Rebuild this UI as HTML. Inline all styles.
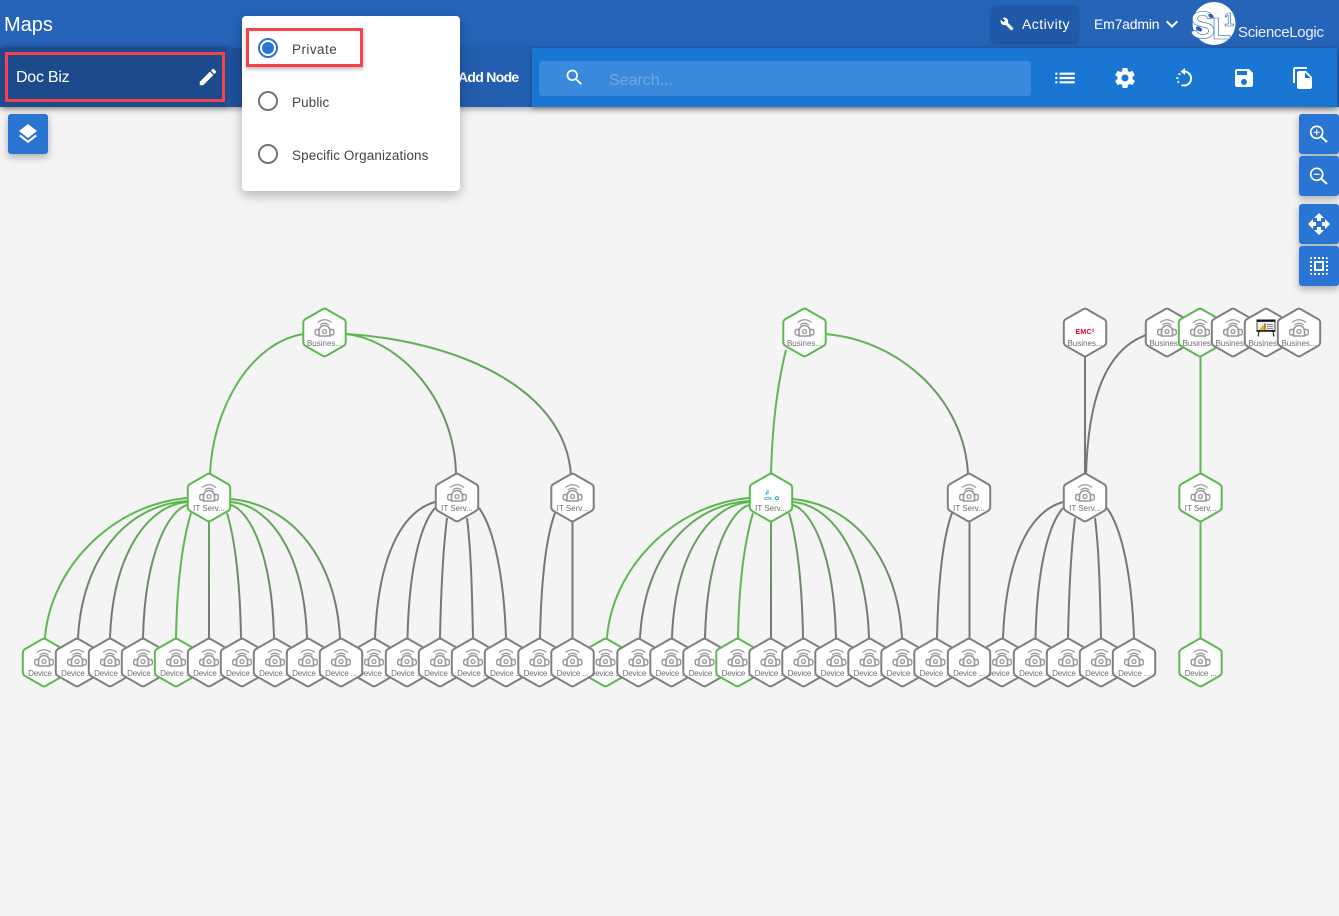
<!DOCTYPE html>
<html lang="en"><head><meta charset="utf-8"><title>Maps</title>
<style>
html,body{margin:0;padding:0;width:1339px;height:916px;overflow:hidden;background:#f4f4f4;font-family:"Liberation Sans",sans-serif}
.a{position:absolute}
svg.i{position:absolute;fill:#fff}
.btn{position:absolute;width:40px;height:40px;background:#2a75d3;border-radius:3px;box-shadow:0 3px 8px rgba(0,0,0,.3)}
.btn svg{position:absolute;left:8px;top:8px;width:24px;height:24px;fill:#fff}
.r{position:absolute;left:258px;width:20px;height:20px;box-sizing:border-box;border:2px solid #757575;border-radius:50%}
.l{position:absolute;left:292px;font-size:13.5px;line-height:18px;color:#444;white-space:nowrap;letter-spacing:.1px}
#g{position:absolute;left:0;top:0}
#g path.e{fill:none;stroke-width:2}
#g text{font-size:8px;fill:#6e6e6e;text-anchor:middle;font-family:"Liberation Sans",sans-serif}
#g text.d{letter-spacing:-.15px}
.k{stroke:#777}.n{stroke:#5cb94f}.t{stroke:url(#gt)}.b{stroke:url(#gb)}
</style></head><body>

<svg id="g" width="1339" height="916" viewBox="0 0 1339 916">
<defs>
<linearGradient id="gt" gradientUnits="userSpaceOnUse" x1="0" y1="333" x2="0" y2="475"><stop offset="0" stop-color="#5cb94f"/><stop offset="1" stop-color="#777"/></linearGradient>
<linearGradient id="gb" gradientUnits="userSpaceOnUse" x1="0" y1="498" x2="0" y2="640"><stop offset="0" stop-color="#5cb94f"/><stop offset=".8" stop-color="#777"/></linearGradient>
<g id="ic" fill="none" stroke="#999">
<path d="M-7,-10Q0,-15.500 7,-10" stroke-width="1.200"/>
<path d="M-4.500,-7.500Q0,-11 4.500,-7.500" stroke-width="1.200"/>
<path d="M-5.500,3.500V-1.500A5.500,5.500 0 0 1 5.500,-1.500V3.500Z" stroke-width="1.600"/>
<circle cx="0" cy="-1" r="2" stroke-width="1.300"/>
<path d="M-5.500,-3H-7.500Q-9.300,-3 -9.300,-1V.5Q-9.300,2.500 -7.500,2.500H-5.500M5.500,-3H7.500Q9.300,-3 9.300,-1V.5Q9.300,2.500 7.500,2.500H5.500" stroke-width="1.400"/>
</g>
<path id="hk" d="M-3,-22.600Q0,-25 3,-22.600L18.900,-13.500Q21.200,-12.200 21.200,-9.500V9.500Q21.200,12.200 18.900,13.500L3,22.600Q0,25 -3,22.600L-18.900,13.500Q-21.200,12.200 -21.200,9.500V-9.500Q-21.200,-12.200 -18.900,-13.500Z" fill="#fff" stroke="#808080" stroke-width="2"/>
<path id="hn" d="M-3,-22.600Q0,-25 3,-22.600L18.900,-13.500Q21.200,-12.200 21.200,-9.500V9.500Q21.200,12.200 18.900,13.500L3,22.600Q0,25 -3,22.600L-18.900,13.500Q-21.200,12.200 -21.200,9.500V-9.500Q-21.200,-12.200 -18.900,-13.500Z" fill="#fff" stroke="#5cb94f" stroke-width="2"/>
<g id="nk"><use href="#hk"/><use href="#ic"/></g>
<g id="nn"><use href="#hn"/><use href="#ic"/></g>
<g id="e10">
<path class="e n" d="M187,498C110,505 50,570 45,638"/>
<path class="e b" d="M187,501C125,505 82,560 78,638"/>
<path class="e b" d="M187,502C150,505 113,550 110,638"/>
<path class="e b" d="M187,505C170,510 145,550 143,638"/>
<path class="e n" d="M191,513C183,540 177,580 176,638"/>
<path class="e b" d="M209,522V640"/>
<path class="e b" d="M227,513C235,540 240,580 241,638"/>
<path class="e b" d="M231,505C248,510 272,550 274,638"/>
<path class="e b" d="M231,502C268,505 304,550 307,638"/>
<path class="e b" d="M231,499C293,505 336,560 340,638"/>
</g>
<g id="e5">
<path class="e k" d="M435,502C400,512 378,560 375,638"/>
<path class="e k" d="M435,508C420,525 409,570 407.500,638"/>
<path class="e k" d="M447,518C443,550 441,590 440,638"/>
<path class="e k" d="M467,518C471,550 472,590 473,638"/>
<path class="e k" d="M479,508C495,530 504,580 506,638"/>
</g>
<g id="e2">
<path class="e k" d="M555,513C545,540 541,590 540,638"/>
<path class="e k" d="M572.500,522V640"/>
</g>
</defs>

<!-- edges -->
<path class="e n" d="M304,334C250,342 212,410 210,475"/>
<path class="e t" d="M346,334C400,340 455,400 456,475"/>
<path class="e t" d="M346,334C450,340 565,385 571,475"/>
<use href="#e10"/>
<use href="#e5"/>
<use href="#e2"/>
<use href="#e10" x="562"/>
<use href="#e2" x="397"/>
<use href="#e5" x="628"/>
<path class="e n" d="M786,350C776,390 772,430 771,475"/>
<path class="e t" d="M825,334C900,340 965,400 968,475"/>
<path class="e k" d="M1085,357V475"/>
<path class="e k" d="M1146,335C1105,350 1088,400 1086,475"/>
<path class="e n" d="M1200.500,357V475M1200.500,522V640"/>

<!-- top row -->
<g transform="translate(324.500,332.500)"><use href="#nn"/><text y="13.500">Busines...</text></g>
<g transform="translate(804.500,332.500)"><use href="#nn"/><text y="13.500">Busines...</text></g>
<g transform="translate(1085,332.500)"><use href="#hk"/><text y="1.500" style="font-size:7px;font-weight:bold;fill:#e4002b;letter-spacing:.3px">EMC²</text><text y="13.500">Busines...</text></g>
<g transform="translate(1167,332.500)"><use href="#nk"/><text y="13.500">Busines...</text></g>
<g transform="translate(1200,332.500)"><use href="#nn"/><text y="13.500">Busines...</text></g>
<g transform="translate(1233,332.500)"><use href="#nk"/><text y="13.500">Busines...</text></g>
<g transform="translate(1266,332.500)"><use href="#hk"/>
<rect x="-9.500" y="-13" width="19" height="2" fill="#111"/><rect x="-9" y="-11" width="18" height="9" fill="#eee" stroke="#222" stroke-width=".8"/>
<rect x="-6" y="-5" width="1.800" height="3" fill="#e9a21b"/><rect x="-4" y="-7" width="1.800" height="5" fill="#e9a21b"/><rect x="-2" y="-9" width="1.800" height="7" fill="#c77a12"/>
<path d="M1,-8H7M1,-6H7M1,-4H7" stroke="#889" stroke-width="1"/>
<path d="M-9.500,-1.500H9.500" stroke="#111" stroke-width="1.500"/><path d="M-7,-1L-8,4M7,-1L8,4" stroke="#111" stroke-width="1"/>
<text y="13.500">Busines...</text></g>
<g transform="translate(1299,332.500)"><use href="#nk"/><text y="13.500">Busines...</text></g>

<!-- middle row -->
<g transform="translate(209,497.500)"><use href="#nn"/><text y="13.500">IT Serv...</text></g>
<g transform="translate(457,497.500)"><use href="#nk"/><text y="13.500">IT Serv...</text></g>
<g transform="translate(572.500,497.500)"><use href="#nk"/><text y="13.500">IT Serv...</text></g>
<g transform="translate(771,497.500)"><use href="#hn"/>
<path d="M-6,-4V-3M-4.500,-6V-3M-3,-7.500V-3" stroke="#1ba0d7" stroke-width=".9"/>
<text x="-3" y="2.500" style="font-size:5.500px;font-weight:bold;fill:#1ba0d7">cis</text><circle cx="6" cy=".8" r="1.500" fill="none" stroke="#1ba0d7"/>
<text y="13.500">IT Serv...</text></g>
<g transform="translate(969,497.500)"><use href="#nk"/><text y="13.500">IT Serv...</text></g>
<g transform="translate(1085,497.500)"><use href="#nk"/><text y="13.500">IT Serv...</text></g>
<g transform="translate(1200.500,497.500)"><use href="#nn"/><text y="13.500">IT Serv...</text></g>

<!-- bottom row: first node of each later group sits beneath its left neighbour -->
<g transform="translate(374,662.500)"><use href="#nk"/><text class="d" y="13.500">Device ...</text></g>
<g transform="translate(605.500,662.500)"><use href="#nn"/><text class="d" y="13.500">Device ...</text></g>
<g transform="translate(1002,662.500)"><use href="#nk"/><text class="d" y="13.500">Device ...</text></g>
<g transform="translate(44,662.500)"><use href="#nn"/><text class="d" y="13.500">Device ...</text></g>
<g transform="translate(77,662.500)"><use href="#nk"/><text class="d" y="13.500">Device ...</text></g>
<g transform="translate(110,662.500)"><use href="#nk"/><text class="d" y="13.500">Device ...</text></g>
<g transform="translate(143,662.500)"><use href="#nk"/><text class="d" y="13.500">Device ...</text></g>
<g transform="translate(176,662.500)"><use href="#nn"/><text class="d" y="13.500">Device ...</text></g>
<g transform="translate(209,662.500)"><use href="#nk"/><text class="d" y="13.500">Device ...</text></g>
<g transform="translate(242,662.500)"><use href="#nk"/><text class="d" y="13.500">Device ...</text></g>
<g transform="translate(275,662.500)"><use href="#nk"/><text class="d" y="13.500">Device ...</text></g>
<g transform="translate(308,662.500)"><use href="#nk"/><text class="d" y="13.500">Device ...</text></g>
<g transform="translate(341,662.500)"><use href="#nk"/><text class="d" y="13.500">Device ...</text></g>
<g transform="translate(407,662.500)"><use href="#nk"/><text class="d" y="13.500">Device ...</text></g>
<g transform="translate(440,662.500)"><use href="#nk"/><text class="d" y="13.500">Device ...</text></g>
<g transform="translate(473,662.500)"><use href="#nk"/><text class="d" y="13.500">Device ...</text></g>
<g transform="translate(506,662.500)"><use href="#nk"/><text class="d" y="13.500">Device ...</text></g>
<g transform="translate(539.500,662.500)"><use href="#nk"/><text class="d" y="13.500">Device ...</text></g>
<g transform="translate(572.500,662.500)"><use href="#nk"/><text class="d" y="13.500">Device ...</text></g>
<g transform="translate(638.500,662.500)"><use href="#nk"/><text class="d" y="13.500">Device ...</text></g>
<g transform="translate(671.500,662.500)"><use href="#nk"/><text class="d" y="13.500">Device ...</text></g>
<g transform="translate(704.500,662.500)"><use href="#nk"/><text class="d" y="13.500">Device ...</text></g>
<g transform="translate(737.500,662.500)"><use href="#nn"/><text class="d" y="13.500">Device ...</text></g>
<g transform="translate(770.500,662.500)"><use href="#nk"/><text class="d" y="13.500">Device ...</text></g>
<g transform="translate(803.500,662.500)"><use href="#nk"/><text class="d" y="13.500">Device ...</text></g>
<g transform="translate(836.500,662.500)"><use href="#nk"/><text class="d" y="13.500">Device ...</text></g>
<g transform="translate(869.500,662.500)"><use href="#nk"/><text class="d" y="13.500">Device ...</text></g>
<g transform="translate(902.500,662.500)"><use href="#nk"/><text class="d" y="13.500">Device ...</text></g>
<g transform="translate(935.500,662.500)"><use href="#nk"/><text class="d" y="13.500">Device ...</text></g>
<g transform="translate(969,662.500)"><use href="#nk"/><text class="d" y="13.500">Device ...</text></g>
<g transform="translate(1035,662.500)"><use href="#nk"/><text class="d" y="13.500">Device ...</text></g>
<g transform="translate(1068,662.500)"><use href="#nk"/><text class="d" y="13.500">Device ...</text></g>
<g transform="translate(1101,662.500)"><use href="#nk"/><text class="d" y="13.500">Device ...</text></g>
<g transform="translate(1134,662.500)"><use href="#nk"/><text class="d" y="13.500">Device ...</text></g>
<g transform="translate(1200.500,662.500)"><use href="#nn"/><text class="d" y="13.500">Device ...</text></g>
</svg>

<!-- header -->
<div class="a" style="left:0;top:0;width:1339px;height:48px;background:#2564b9;box-shadow:0 2px 4px rgba(0,0,0,.3)"></div>
<div class="a" style="left:0;top:48px;width:1339px;height:59px;background:#2461b3;box-shadow:0 2px 6px rgba(0,0,0,.35)"></div>
<div class="a" style="left:0;top:48px;width:226px;height:59px;background:#1c4a8c;box-shadow:2px 0 6px rgba(0,0,0,.3)"></div>
<div class="a" style="left:226px;top:48px;width:306px;height:59px;background:linear-gradient(90deg,#1f509a,#2460b3)"></div>
<div class="a" style="left:532px;top:48px;width:805px;height:59px;background:#1976d2;box-shadow:0 2px 5px rgba(0,0,0,.3)"></div>
<div class="a" style="left:539px;top:61px;width:492px;height:35px;background:#3b89dc;border-radius:3px"></div>

<div class="a" style="left:4px;top:12px;font-size:20px;line-height:26px;color:#fff">Maps</div>
<div class="a" style="left:16px;top:68px;font-size:16px;line-height:20px;color:#fff;letter-spacing:-.25px">Doc Biz</div>
<svg class="i" style="left:197px;top:66px" width="22" height="22" viewBox="0 0 24 24"><path d="M3 17.250V21h3.750L17.810 9.940l-3.750-3.750L3 17.250zM20.710 7.040a1 1 0 0 0 0-1.410l-2.340-2.340a1 1 0 0 0-1.410 0l-1.830 1.830 3.750 3.750 1.830-1.830z"/></svg>
<div class="a" style="left:5px;top:52px;width:220px;height:50px;box-sizing:border-box;border:3px solid #f4434b"></div>
<div class="a" style="left:458px;top:69px;font-size:14px;line-height:16px;color:#fff;font-weight:bold;letter-spacing:-.7px">Add Node</div>
<svg class="i" style="left:564px;top:67px" width="21" height="21" viewBox="0 0 24 24"><path d="M15.500 14h-.790l-.280-.270A6.471 6.471 0 0 0 16 9.500 6.500 6.500 0 1 0 9.500 16c1.610 0 3.090-.590 4.230-1.570l.270.280v.790l5 4.990L20.490 19l-4.990-5zm-6 0C7.010 14 5 11.990 5 9.500S7.010 5 9.500 5 14 7.010 14 9.500 11.990 14 9.500 14z"/></svg>
<div class="a" style="left:609px;top:72px;font-size:16px;line-height:18px;color:#6fa9e8">Search...</div>

<div class="a" style="left:992px;top:6px;width:86px;height:36px;background:#2059a8;border-radius:3px;box-shadow:0 1px 3px rgba(0,0,0,.3)"></div>
<svg class="i" style="left:1000px;top:17px" width="14" height="14" viewBox="0 0 24 24"><path d="M22.700 19l-9.100-9.100c.9-2.300.4-5-1.500-6.900-2-2-5-2.400-7.400-1.300L9 6 6 9 1.600 4.700C.4 7.100.9 10.100 2.900 12.100c1.900 1.900 4.600 2.400 6.900 1.500l9.100 9.100c.4.4 1 .4 1.400 0l2.300-2.300c.5-.4.5-1.100.1-1.400z"/></svg>
<div class="a" style="left:1022px;top:16px;font-size:14px;line-height:16px;color:#fff;letter-spacing:.45px">Activity</div>
<div class="a" style="left:1094px;top:16px;font-size:14px;line-height:16px;color:#fff;letter-spacing:-.2px">Em7admin</div>
<svg class="i" style="left:1160px;top:12px" width="24" height="24" viewBox="0 0 24 24"><path d="M16.590 8.590L12 13.170 7.410 8.590 6 10l6 6 6-6z"/></svg>

<svg class="a" style="left:1190px;top:0" width="50" height="48" viewBox="0 0 50 48">
<circle cx="24" cy="23.500" r="21.500" fill="#fff"/>
<text x="0" y="38" style="font:bold 38px 'Liberation Sans',sans-serif;fill:#fff;stroke:#2564b9;stroke-width:.6">S</text>
<text x="22" y="39" style="font:bold 31px 'Liberation Sans',sans-serif;fill:#fff;stroke:#2564b9;stroke-width:.6">L</text>
<text x="34" y="26" style="font:bold 18px 'Liberation Sans',sans-serif;fill:#fff;stroke:#2564b9;stroke-width:.6">1</text>
<ellipse cx="9" cy="29" rx="3.500" ry="2" fill="#2564b9" transform="rotate(30 9 29)"/>
<ellipse cx="21" cy="16" rx="3" ry="1.800" fill="#2564b9" transform="rotate(30 21 16)"/>
</svg>
<div class="a" style="left:1238px;top:23px;font-size:15px;line-height:20px;color:#eef;letter-spacing:-.3px;white-space:nowrap">ScienceLogic</div>

<svg class="i" style="left:1052px;top:65px" width="26" height="26" viewBox="0 0 24 24"><path d="M3 13h2v-2H3v2zm0 4h2v-2H3v2zm0-8h2V7H3v2zm4 4h14v-2H7v2zm0 4h14v-2H7v2zM7 7v2h14V7H7z"/></svg>
<svg class="i" style="left:1113px;top:66px" width="24" height="24" viewBox="0 0 24 24"><path d="M19.430 12.980c.04-.32.07-.64.07-.98s-.03-.66-.07-.98l2.110-1.650c.19-.15.24-.42.12-.64l-2-3.460c-.12-.22-.39-.3-.61-.22l-2.490 1c-.52-.4-1.080-.73-1.690-.98l-.38-2.650C14.460 2.180 14.250 2 14 2h-4c-.25 0-.46.18-.49.42l-.38 2.650c-.61.25-1.170.59-1.690.98l-2.490-1c-.23-.09-.49 0-.61.22l-2 3.460c-.13.22-.07.49.12.64l2.110 1.650c-.04.32-.07.65-.07.98s.03.66.07.98l-2.110 1.650c-.19.15-.24.42-.12.64l2 3.460c.12.22.39.3.61.22l2.490-1c.52.4 1.080.73 1.690.98l.38 2.650c.03.24.24.42.49.42h4c.25 0 .46-.18.49-.42l.38-2.650c.61-.25 1.170-.59 1.690-.98l2.490 1c.23.09.49 0 .61-.22l2-3.460c.12-.22.07-.49-.12-.64l-2.110-1.650zM12 15.500c-1.930 0-3.500-1.570-3.500-3.500s1.570-3.500 3.500-3.500 3.500 1.570 3.500 3.500-1.570 3.500-3.500 3.500z"/></svg>
<svg class="a" style="left:1172px;top:66px" width="24" height="24" viewBox="0 0 24 24"><path d="M12 5.500A7 7 0 1 1 9.500 19" fill="none" stroke="#fff" stroke-width="2"/><path d="M13 2L8.500 5.500 13 9z" fill="#fff"/><path d="M8 7.500L6.800 8.800M5.400 11.300L5.200 13M5.800 15.300L6.800 16.600" stroke="#fff" stroke-width="2" fill="none"/></svg>
<svg class="i" style="left:1232px;top:66px" width="24" height="24" viewBox="0 0 24 24"><path d="M17 3H5c-1.110 0-2 .9-2 2v14c0 1.100.89 2 2 2h14c1.100 0 2-.9 2-2V7l-4-4zm-5 16c-1.660 0-3-1.340-3-3s1.340-3 3-3 3 1.340 3 3-1.340 3-3 3zm3-10H5V5h10v4z"/></svg>
<svg class="i" style="left:1291px;top:66px" width="24" height="24" viewBox="0 0 24 24"><path d="M16 1H4c-1.100 0-2 .9-2 2v14h2V3h12V1zm-1 4l6 6v10c0 1.100-.9 2-2 2H7.990C6.890 23 6 22.100 6 21l.01-14c0-1.100.89-2 1.990-2h7zm-1 7h5.500L14 6.500V12z"/></svg>

<!-- floating buttons -->
<div class="btn" style="left:8px;top:114px"><svg viewBox="0 0 24 24"><path d="M11.990 18.540l-7.370-5.730L3 14.070l9 7 9-7-1.630-1.270-7.380 5.740zM12 16l7.360-5.730L21 9l-9-7-9 7 1.630 1.270L12 16z"/></svg></div>
<div class="btn" style="left:1299px;top:114px"><svg viewBox="0 0 24 24"><circle cx="9.700" cy="10.300" r="6" fill="none" stroke="#fff" stroke-width="1.700"/><path d="M14.200 14.800L20 20" stroke="#fff" stroke-width="2" fill="none"/><path d="M6.800 10.300H12.600M9.700 7.400V13.200" stroke="#fff" stroke-width="1.200" fill="none"/></svg></div>
<div class="btn" style="left:1299px;top:156px"><svg viewBox="0 0 24 24"><circle cx="9.700" cy="10.300" r="6" fill="none" stroke="#fff" stroke-width="1.700"/><path d="M14.200 14.800L20 20" stroke="#fff" stroke-width="2" fill="none"/><path d="M6.800 10.300H12.600" stroke="#fff" stroke-width="1.200" fill="none"/></svg></div>
<div class="btn" style="left:1299px;top:204px"><svg viewBox="0 0 24 24"><path d="M10 9h4V6h3l-5-5-5 5h3v3zm-1 1H6V7l-5 5 5 5v-3h3v-4zm14 2l-5-5v3h-3v4h3v3l5-5zm-9 3h-4v3H7l5 5 5-5h-3v-3z"/></svg></div>
<div class="btn" style="left:1299px;top:246px"><svg viewBox="0 0 24 24"><path d="M3 5h2V3c-1.100 0-2 .9-2 2zm0 8h2v-2H3v2zm4 8h2v-2H7v2zM3 9h2V7H3v2zm10-6h-2v2h2V3zm6 0v2h2c0-1.100-.9-2-2-2zM5 21v-2H3c0 1.100.9 2 2 2zm-2-4h2v-2H3v2zM9 3H7v2h2V3zm2 18h2v-2h-2v2zm8-8h2v-2h-2v2zm0 8c1.100 0 2-.9 2-2h-2v2zm0-12h2V7h-2v2zm0 8h2v-2h-2v2zm-4 4h2v-2h-2v2zm0-16h2V3h-2v2zM7 17h10V7H7v10zm2-8h6v6H9V9z"/></svg></div>

<!-- popup -->
<div class="a" style="left:242px;top:16px;width:218px;height:175px;background:#fff;border-radius:4px;box-shadow:0 4px 12px rgba(0,0,0,.28)"></div>
<div class="a" style="left:246px;top:28px;width:117px;height:39px;box-sizing:border-box;border:3px solid #f4434b;box-shadow:0 2px 4px rgba(0,0,0,.3)"></div>
<div class="r" style="top:38px;border-color:#2a75d3"></div>
<div class="a" style="left:262px;top:42px;width:12px;height:12px;border-radius:50%;background:#2a75d3"></div>
<div class="l" style="top:41px;letter-spacing:.45px">Private</div>
<div class="r" style="top:91px"></div>
<div class="l" style="top:94px">Public</div>
<div class="r" style="top:144px"></div>
<div class="l" style="top:147px">Specific Organizations</div>
</body></html>
